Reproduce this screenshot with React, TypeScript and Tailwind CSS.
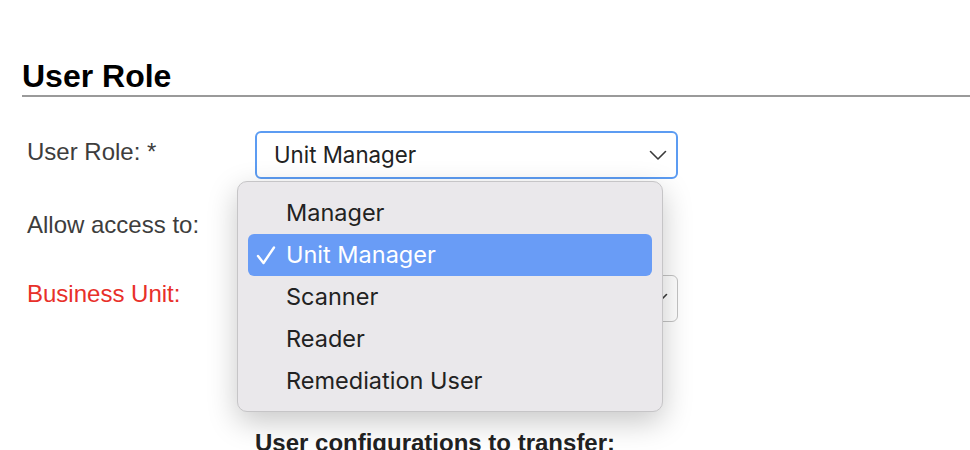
import React from 'react';

const roles = ['Manager', 'Unit Manager', 'Scanner', 'Reader', 'Remediation User'];

const Chevron: React.FC = () => (
  <svg width="18" height="11" viewBox="0 0 18 11" fill="none" className="shrink-0">
    <polyline points="1.5,1.5 9,9 16.5,1.5" stroke="#3a3a3a" strokeWidth="1.6" strokeLinecap="round" strokeLinejoin="round" />
  </svg>
);

const Check: React.FC = () => (
  <svg width="22" height="22" viewBox="0 0 22 22" fill="none">
    <polyline points="3,12 8.5,19 19,3.5" stroke="#ffffff" strokeWidth="2.4" strokeLinecap="round" strokeLinejoin="round" />
  </svg>
);

const App: React.FC = () => {
  const selected = 'Unit Manager';

  return (
    <div className="relative w-[970px] h-[450px] overflow-hidden bg-white font-['Liberation_Sans',Arial,sans-serif]">
      <div className="pl-[22px] pt-[57px]">
        <h2 className="text-[32px] leading-[38px] font-bold text-black">User Role</h2>
        <div className="h-[2px] bg-[#9a9a9a]" />

        <div className="mt-[34px] flex flex-col">
          {/* row 1 */}
          <div className="flex h-[48px]">
            <label className="w-[233px] pl-[5px] pt-[7px] text-[24px] leading-[28px] text-[#3d3d3d]">User Role: *</label>
            <div className="w-[423px] h-[48px] rounded-[6px] border-2 border-[#5c9cf2] bg-white flex items-center justify-between pl-[17px] pr-[9px] font-['Inter',sans-serif] text-[22.3px] text-[#222]">
              <span>Unit Manager</span>
              <Chevron />
            </div>
          </div>

          {/* row 2 */}
          <div className="mt-[25px] flex h-[48px]">
            <label className="w-[233px] pl-[5px] pt-[7px] text-[24px] leading-[28px] text-[#3d3d3d]">Allow access to:</label>
          </div>

          {/* row 3 */}
          <div className="mt-[23px] flex h-[47px]">
            <label className="w-[233px] pl-[5px] pt-[5px] text-[24px] leading-[28px] text-[#e8302a]">Business Unit:</label>
            <div className="w-[423px] h-[47px] rounded-[6px] border border-[#c4c4c4] bg-white flex items-center justify-end pr-[9px]">
              <Chevron />
            </div>
          </div>

          <p className="mt-[107px] ml-[233px] text-[24px] leading-[28px] font-bold text-[#222]">User configurations to transfer:</p>
        </div>
      </div>

      {/* open select menu */}
      <div className="absolute left-[237px] top-[181px] w-[426px] h-[231px] rounded-[10px] border border-[#c6c5c7] bg-[#eae8eb] p-[10px] shadow-[0_10px_30px_rgba(0,0,0,0.22)] font-['Inter',sans-serif]">
        {roles.map((r) => {
          const active = r === selected;
          return (
            <div
              key={r}
              className={
                active
                  ? 'relative h-[42px] rounded-[6px] bg-[#699cf6] flex items-center pl-[38px] text-[23.5px] text-white'
                  : 'relative h-[42px] rounded-[6px] flex items-center pl-[38px] text-[23.5px] text-[#222]'
              }
            >
              {active && (
                <span className="absolute left-[7px] top-[10px]">
                  <Check />
                </span>
              )}
              {r}
            </div>
          );
        })}
      </div>
    </div>
  );
};

export default App;
